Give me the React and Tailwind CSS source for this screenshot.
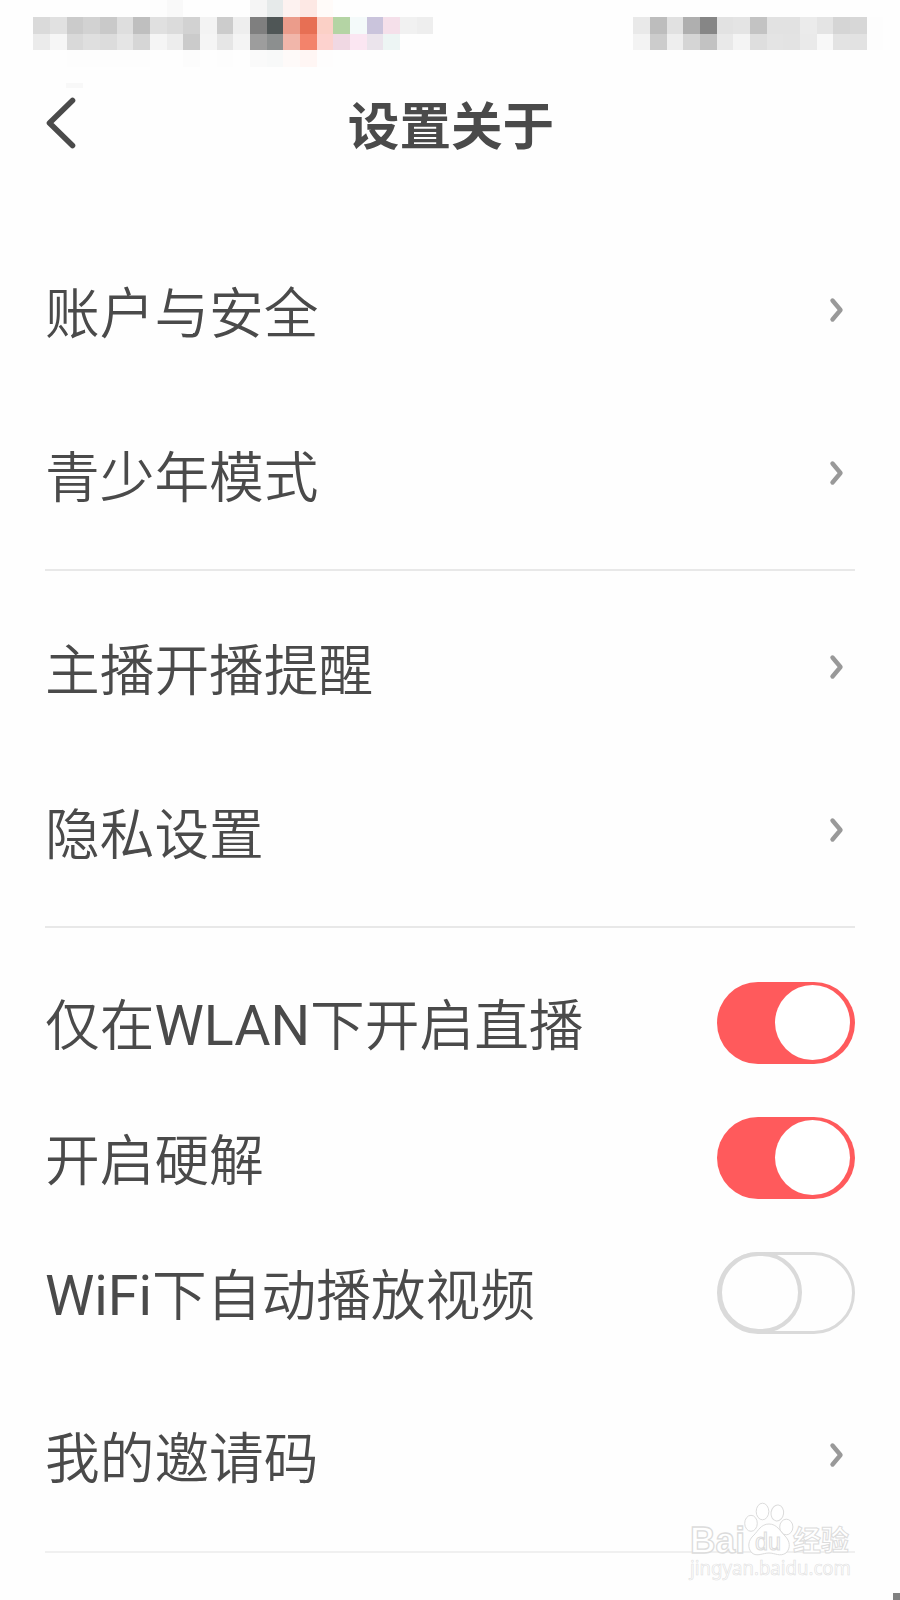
import React from "react";

const mosaic = [
  [
    [9, "bg-[#fdfdfd]"], [10, "bg-[#f9f9f9]"], [15, "bg-[#f5f5f5]"], [16, "bg-[#e6eaea]"],
    [17, "bg-[#fdf2f0]"], [18, "bg-[#fde8e4]"], [19, "bg-[#fffbf9]"],
  ],
  [
    [2, "bg-[#dadada]"], [3, "bg-[#e1e1e1]"], [4, "bg-[#cbcbcb]"], [5, "bg-[#d2d2d2]"], [6, "bg-[#c9c9c9]"],
    [7, "bg-[#dedede]"], [8, "bg-[#bfbfbf]"], [9, "bg-[#e0e0e0]"], [10, "bg-[#dbdbdb]"], [11, "bg-[#d2d2d2]"],
    [12, "bg-[#f3f3f3]"], [13, "bg-[#cccccc]"], [14, "bg-[#eeeeee]"], [15, "bg-[#7f7f7f]"], [16, "bg-[#4f5656]"],
    [17, "bg-[#eb9c8b]"], [18, "bg-[#e76f54]"], [19, "bg-[#fbd0c6]"], [20, "bg-[#b4d4a4]"], [21, "bg-[#f4fafa]"],
    [22, "bg-[#cac4dc]"], [23, "bg-[#f5e0ea]"], [24, "bg-[#f1f1f1]"], [25, "bg-[#eeeeee]"],
    [38, "bg-[#e9e9e9]"], [39, "bg-[#bdbdbd]"], [40, "bg-[#e1e1e1]"], [41, "bg-[#afafaf]"], [42, "bg-[#868686]"],
    [43, "bg-[#e2e2e2]"], [44, "bg-[#e4e4e4]"], [45, "bg-[#c3c3c3]"], [46, "bg-[#e2e2e2]"], [47, "bg-[#e2e2e2]"],
    [48, "bg-[#ebebeb]"], [49, "bg-[#e4e4e4]"], [50, "bg-[#d5d5d5]"], [51, "bg-[#d7d7d7]"], [52, "bg-[#fdfdfd]"],
  ],
  [
    [2, "bg-[#ebebeb]"], [3, "bg-[#f6f6f6]"], [4, "bg-[#d9d9d9]"], [5, "bg-[#dfdfdf]"], [6, "bg-[#dcdcdc]"],
    [7, "bg-[#e5e5e5]"], [8, "bg-[#d6d6d6]"], [9, "bg-[#f5f5f5]"], [10, "bg-[#ededed]"], [11, "bg-[#cbcbcb]"],
    [12, "bg-[#f5f5f5]"], [13, "bg-[#e6e6e6]"], [14, "bg-[#f4f4f4]"], [15, "bg-[#9d9d9d]"], [16, "bg-[#8c8f8f]"],
    [17, "bg-[#f1b6aa]"], [18, "bg-[#f3836b]"], [19, "bg-[#fdd2ce]"], [20, "bg-[#f0d8e3]"], [21, "bg-[#fbe6f2]"],
    [22, "bg-[#ebe4ec]"], [23, "bg-[#edf5f4]"],
    [38, "bg-[#f3f3f3]"], [39, "bg-[#cccccc]"], [40, "bg-[#eeeeee]"], [41, "bg-[#d5d5d5]"], [42, "bg-[#c2c2c2]"],
    [43, "bg-[#e9e9e9]"], [44, "bg-[#f4f4f4]"], [45, "bg-[#dedede]"], [46, "bg-[#e4e4e4]"], [47, "bg-[#e3e3e3]"],
    [48, "bg-[#eaeaea]"], [49, "bg-[#f8f8f8]"], [50, "bg-[#e3e3e3]"], [51, "bg-[#e2e2e2]"], [52, "bg-[#fdfdfd]"],
  ],
  [
    [4, "bg-[#fdfdfd]"], [5, "bg-[#fdfdfd]"], [6, "bg-[#fdfdfd]"], [7, "bg-[#fdfdfd]"], [8, "bg-[#fdfdfd]"],
    [11, "bg-[#fcfcfc]"], [13, "bg-[#fdfdfd]"], [15, "bg-[#fafafa]"], [16, "bg-[#f8f9f9]"],
    [17, "bg-[#fefaf9]"], [18, "bg-[#fff6f4]"], [19, "bg-[#fefdfd]"],
  ],
];

function StatusBar() {
  return (
    <div className="flex h-[67px] flex-col">
      {mosaic.map((row, r) => {
        const colors = new Map(row);
        return (
          <div key={r} className="grid flex-1 grid-cols-[repeat(54,minmax(0,1fr))]">
            {Array.from({ length: 54 }, (_, c) => (
              <span key={c} className={colors.get(c) || "bg-transparent"} />
            ))}
          </div>
        );
      })}
    </div>
  );
}

function Header() {
  return (
    <header className="flex h-[161px] flex-col">
      <div className="ml-[66px] mt-4 h-[5px] w-[17px] bg-[#f8f8f8]" />
      <div className="mt-[9px] flex h-[52px] items-center justify-between px-[45px]">
        <svg className="h-[52px] w-8" viewBox="0 0 32 52" fill="none" stroke="#4a4a4a" strokeWidth="5.6" strokeLinecap="round" strokeLinejoin="round">
          <path d="M27.5 3.5 4.5 26 27.5 48.5" />
        </svg>
        <h1 className="pl-[2px] pt-[9px] text-[51.6px] font-bold leading-[52px]">设置关于</h1>
        <span className="w-8" />
      </div>
    </header>
  );
}

function Chevron() {
  return (
    <svg className="mr-[10px] h-7 w-4" viewBox="0 0 16 28" fill="none" stroke="#999" strokeWidth="4.4" strokeLinecap="round" strokeLinejoin="round">
      <path d="M3.5 4.5 11.5 14 3.5 23.5" />
    </svg>
  );
}

function Label({ children }) {
  return (
    <span className="text-[54.7px] font-[350] leading-[80px]">
      {children.split(/([A-Za-z]+)/).filter(Boolean).map((part, i) =>
        /^[A-Za-z]/.test(part) ? (
          <span key={i} className="text-[55.6px] font-normal">{part}</span>
        ) : (
          part
        )
      )}
    </span>
  );
}

function LinkRow({ label }) {
  return (
    <div className="flex h-[163.5px] items-center justify-between">
      <div className="pt-[9px]">
        <Label>{label}</Label>
      </div>
      <Chevron />
    </div>
  );
}

function Toggle({ on }) {
  return on ? (
    <span className="flex h-[82px] w-[138px] items-center justify-end rounded-full bg-[#ff5a5c] pr-[5px]">
      <span className="size-[75px] rounded-full bg-white" />
    </span>
  ) : (
    <span className="flex h-[82px] w-[138px] items-center rounded-full border-[3px] border-[#dadada]">
      <span className="-ml-[2px] h-[81px] w-[84px] shrink-0 rounded-full border-[4px] border-[#dadada]" />
    </span>
  );
}

function ToggleRow({ label, on }) {
  return (
    <div className="flex h-[135px] items-center justify-between">
      <div className="pt-[7px]">
        <Label>{label}</Label>
      </div>
      <Toggle on={on} />
    </div>
  );
}

function Watermark() {
  return (
    <svg className="absolute left-[680px] top-[1496px] h-[92px] w-[180px]" viewBox="0 0 180 92" fill="#fff" stroke="#dcdcdc" strokeWidth="1">
      <text x="10" y="57" fontFamily="Liberation Sans, sans-serif" fontWeight="700" fontSize="36" textLength="55" lengthAdjust="spacingAndGlyphs" strokeWidth="1.3">Bai</text>
      <ellipse cx="71" cy="27.3" rx="6.3" ry="8" />
      <ellipse cx="82.5" cy="15.5" rx="6.3" ry="8.3" />
      <ellipse cx="97.3" cy="17" rx="6.3" ry="8" transform="rotate(8 97.3 17)" />
      <ellipse cx="106.3" cy="31" rx="6.6" ry="7.8" />
      <path d="M89 28C81 28 78 35 74 39C68 44 67 52 72 57C77 61 83 57 89 57C95 57 100 61 106 57C111 52 110 45 105 40C100 35 97 28 89 28Z" />
      <text x="75" y="54" fontFamily="Liberation Sans, sans-serif" fontSize="23" textLength="26" lengthAdjust="spacingAndGlyphs">du</text>
      <text x="113" y="55" fontFamily="Noto Sans CJK SC, sans-serif" fontWeight="700" fontSize="28">经验</text>
      <text x="10" y="79" fontFamily="Noto Sans, sans-serif" fontSize="19" textLength="161" lengthAdjust="spacingAndGlyphs" strokeWidth=".6" stroke="#dedede">jingyan.baidu.com</text>
    </svg>
  );
}

export default function App() {
  return (
    <div className="relative h-[1600px] w-[900px] overflow-hidden bg-[#fefefe] font-[Roboto,'Noto_Sans_CJK_SC',sans-serif] text-[#4a4a4a]">
      <StatusBar />
      <Header />
      <main className="px-[45px]">
        <section className="border-b-2 border-[#e8e8e8] pb-[14px]">
          <LinkRow label="账户与安全" />
          <LinkRow label="青少年模式" />
        </section>
        <section className="border-b-2 border-[#e8e8e8] pb-[14px] pt-[14px]">
          <LinkRow label="主播开播提醒" />
          <LinkRow label="隐私设置" />
        </section>
        <section className="border-b-2 border-[#f0f0f0] pb-[14px] pt-[27px]">
          <ToggleRow label="仅在WLAN下开启直播" on />
          <ToggleRow label="开启硬解" on />
          <ToggleRow label="WiFi下自动播放视频" />
          <div className="pt-[13px]">
            <LinkRow label="我的邀请码" />
          </div>
        </section>
      </main>
      <Watermark />
      <span className="absolute bottom-0 right-0 size-[7px] bg-[#808080]" />
    </div>
  );
}
